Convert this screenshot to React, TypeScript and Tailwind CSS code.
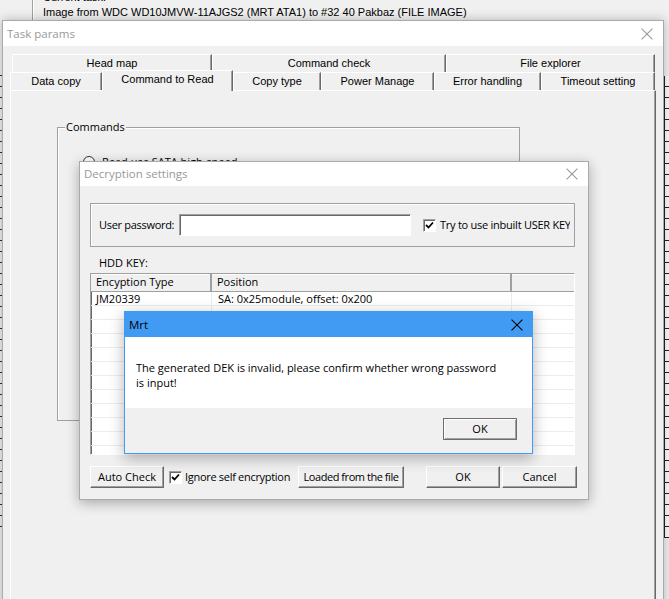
import React from "react";

const ui = "font-['Open_Sans',sans-serif] text-[11px] text-black";
const classic = "font-['Liberation_Sans',Arial,sans-serif] text-[11px] text-black";

const raised =
  "border border-t-white border-l-white border-r-[#696969] border-b-[#696969] shadow-[inset_-1px_-1px_0_#a0a0a0] bg-[#f0f0f0]";
const sunken =
  "border border-t-[#a0a0a0] border-l-[#a0a0a0] border-r-white border-b-white shadow-[inset_1px_1px_0_#696969]";

function CloseIcon({ color, size = 11 }: { color: string; size?: number }) {
  return (
    <svg width={size} height={size} viewBox="0 0 11 11">
      <path d="M0.5 0.5 L10.5 10.5 M10.5 0.5 L0.5 10.5" stroke={color} strokeWidth="1" fill="none" />
    </svg>
  );
}

function Check() {
  return (
    <span className={`${sunken} w-[13px] h-[13px] bg-white flex items-center justify-center shrink-0`}>
      <svg width="9" height="9" viewBox="0 0 9 9">
        <path d="M1 4 L3.5 6.5 L8 1.5" stroke="#000" strokeWidth="1.8" fill="none" />
      </svg>
    </span>
  );
}

function Button({ label, w, extra = "" }: { label: string; w: string; extra?: string }) {
  return (
    <div className={`${raised} ${w} h-[22px] flex items-center justify-center whitespace-nowrap ${ui} ${extra}`}>
      {label}
    </div>
  );
}

const row1Tabs = [
  { label: "Head map", w: "w-[200px]" },
  { label: "Command check", w: "w-[234px]" },
  { label: "File explorer", w: "w-[209px]" },
];

const row2Tabs = [
  { label: "Data copy", w: "w-[92px]" },
  { label: "Command to Read", w: "w-[131px]", active: true },
  { label: "Copy type", w: "w-[88px]" },
  { label: "Power Manage", w: "w-[113px]" },
  { label: "Error handling", w: "w-[107px]" },
  { label: "Timeout setting", w: "w-[114px]" },
];

function Tab({ label, w, active }: { label: string; w: string; active?: boolean }) {
  return (
    <div
      className={`${w} ${
        active ? "h-[21px] -mb-[1px] relative z-10 pb-[3px]" : "h-[18px]"
      } bg-[#f0f0f0] border-t border-l border-r border-t-white border-l-white border-r-[#696969] shadow-[inset_-1px_0_0_#a0a0a0] flex items-center justify-center ${classic}`}
    >
      {label}
    </div>
  );
}

function TaskParams() {
  return (
    <div className="absolute left-[2px] top-[20px] w-[662px] h-[600px] border border-[#aaaaaa] bg-[#f0f0f0] flex flex-col shadow-[0_0_10px_rgba(0,0,0,0.25)]">
      <div className="h-[25px] bg-white flex items-center justify-between pl-[4px] pr-[10px] shrink-0">
        <span className="font-['Open_Sans',sans-serif] text-[11.5px] text-[#999999]">Task params</span>
        <CloseIcon color="#999999" size={12} />
      </div>

      <div className="flex-1 flex flex-col px-[7px] pt-[8px]">
        <div className="flex h-[18px] pl-[2px]">
          {row1Tabs.map((t) => (
            <Tab key={t.label} {...t} />
          ))}
        </div>
        <div className="flex items-end h-[18px]">
          {row2Tabs.map((t) => (
            <Tab key={t.label} {...t} />
          ))}
        </div>

        {/* tab page */}
        <div className="flex-1 w-[646px] border border-t-white border-l-white border-r-[#696969] border-b-[#696969] shadow-[inset_-1px_0_0_#a0a0a0]">
          <div className="relative ml-[46px] mt-[36px] w-[463px] h-[294px] border border-[#a0a0a0] shadow-[inset_1px_1px_0_#fff]">
            <span className={`absolute -top-[9px] left-[7px] px-[1px] bg-[#f0f0f0] ${ui}`}>Commands</span>
            <div className="flex items-center pl-[25px] pt-[26px] gap-[7px]">
              <span className="w-[12px] h-[12px] rounded-full border border-[#333] bg-white" />
              <span className={ui}>Read use SATA high-speed</span>
            </div>
          </div>
        </div>
      </div>
    </div>
  );
}

function DecryptionSettings() {
  const rows = Array.from({ length: 12 });
  return (
    <div className="absolute left-[79px] top-[161px] w-[510px] h-[339px] border border-[#aaaaaa] bg-[#f0f0f0] flex flex-col shadow-[0_3px_12px_rgba(0,0,0,0.3)]">
      <div className="h-[24px] bg-white flex items-center justify-between pl-[4px] pr-[10px] shrink-0">
        <span className="font-['Open_Sans',sans-serif] text-[11.5px] text-[#999999]">Decryption settings</span>
        <CloseIcon color="#999999" size={12} />
      </div>

      <div className="flex-1 px-[10px] pt-[17px]">
        {/* password group */}
        <div className="w-[485px] h-[44px] border border-[#a0a0a0] shadow-[inset_1px_1px_0_#fff] flex items-center pl-[8px]">
          <span className={`${ui} w-[80px] tracking-[-0.3px] whitespace-nowrap`}>User password:</span>
          <div className={`${sunken} w-[232px] h-[22px] bg-white`} />
          <div className="ml-[12px] w-[147px] overflow-hidden whitespace-nowrap flex items-center gap-[4px]">
            <Check />
            <span className={`${ui} tracking-[-0.25px]`}>Try to use inbuilt USER KEY</span>
          </div>
        </div>

        <div className={`${ui} pl-[9px] mt-[8px] leading-[16px]`}>HDD KEY:</div>

        {/* key list */}
        <div className={`${sunken} mt-[2px] w-[485px] h-[182px] bg-white overflow-hidden flex flex-col`}>
          <div className="flex h-[18px] shrink-0 bg-[#f0f0f0] border-b border-b-[#a0a0a0] shadow-[inset_0_1px_0_#fff]">
            <div className={`w-[121px] border-r-2 border-r-[#a0a0a0] pl-[5px] flex items-center ${ui}`}>Encyption Type</div>
            <div className={`w-[300px] border-r-2 border-r-[#a0a0a0] pl-[5px] flex items-center ${ui}`}>Position</div>
            <div className="flex-1" />
          </div>
          {rows.map((_, i) => (
            <div key={i} className="flex h-[14px] shrink-0 border-b border-b-[#ececec]">
              <div className={`w-[121px] border-r border-r-[#ececec] pl-[5px] leading-[14px] ${ui}`}>
                {i === 0 ? "JM20339" : ""}
              </div>
              <div className={`w-[300px] border-r border-r-[#ececec] pl-[6px] leading-[14px] ${ui}`}>
                {i === 0 ? "SA: 0x25module, offset: 0x200" : ""}
              </div>
              <div className="flex-1" />
            </div>
          ))}
        </div>

        {/* bottom buttons */}
        <div className="flex items-center h-[22px] mt-[11px]">
          <Button label="Auto Check" w="w-[74px]" />
          <div className="ml-[5px] flex items-center gap-[3px] w-[126px] whitespace-nowrap">
            <Check />
            <span className={`${ui} tracking-[-0.3px]`}>Ignore self encryption</span>
          </div>
          <Button label="Loaded from the file" w="w-[106px]" extra="ml-[3px] tracking-[-0.45px]" />
          <Button label="OK" w="w-[74px]" extra="ml-[22px]" />
          <Button label="Cancel" w="w-[75px]" extra="ml-[2px]" />
        </div>
      </div>
    </div>
  );
}

function MrtMessage() {
  return (
    <div className="absolute left-[124px] top-[311px] w-[409px] h-[143px] border border-[#429bf2] bg-[#f0f0f0] flex flex-col shadow-[0_4px_14px_rgba(0,0,0,0.3)]">
      <div className="h-[25px] bg-[#429bf2] flex items-center justify-between pl-[4px] pr-[9px] shrink-0">
        <span className="font-['Open_Sans',sans-serif] text-[11.5px] text-black">Mrt</span>
        <CloseIcon color="#000000" size={12} />
      </div>
      <div className={`h-[71px] bg-white pl-[11px] pt-[23px] leading-[15px] ${ui}`}>
        The generated DEK is invalid, please confirm whether wrong password
        <br />
        is input!
      </div>
      <div className="flex-1 flex justify-end items-start pt-[10px] pr-[15px]">
        <div
          className={`w-[74px] h-[22px] border border-[#6d6d6d] shadow-[inset_1px_1px_0_#fff,inset_-1px_-1px_0_#a0a0a0] bg-[#f0f0f0] flex items-center justify-center ${ui}`}
        >
          OK
        </div>
      </div>
    </div>
  );
}

export default function App() {
  const ticks = Array.from({ length: 42 });
  return (
    <div className="relative w-[669px] h-[599px] overflow-hidden bg-[#f0f0f0]">
      {/* main window behind the dialogs */}
      <div className="absolute left-0 top-0 w-full h-[21px] flex">
        <div className="w-[33px] h-full border-r border-r-[#a0a0a0] shadow-[1px_0_0_#fff]" />
        <div className={`relative flex-1 pl-[10px] ${classic}`}>
          <div className="absolute -top-[9px] left-[10px] leading-[13px]">Current task:</div>
          <div className="pt-[5px] leading-[14px]">
            Image from WDC WD10JMVW-11AJGS2 (MRT ATA1) to #32 40 Pakbaz (FILE IMAGE)
          </div>
        </div>
      </div>

      <div className="absolute left-0 top-[75px] w-[3px] flex flex-col">
        {ticks.map((_, i) => (
          <div key={i} className="h-[11px] border-t border-t-[#333]" />
        ))}
      </div>
      <div className="absolute left-[664px] top-[76px] w-[5px] flex flex-col">
        {ticks.map((_, i) => (
          <div key={i} className="h-[11px] border-l border-b border-[#222] bg-[#fafafa]" />
        ))}
      </div>

      <TaskParams />
      <DecryptionSettings />
      <MrtMessage />
    </div>
  );
}
